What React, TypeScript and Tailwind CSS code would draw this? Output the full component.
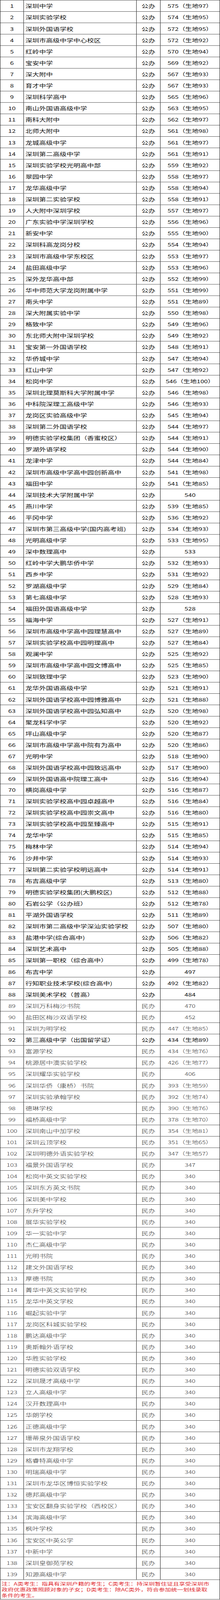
const G = '公办'
const M = '民办'

// [学校, 性质, 分数线]
const rows: [string, string, string][] = [
    ['深圳中学', G, '575（生地97）'],
    ['深圳实验学校', G, '574（生地95）'],
    ['深圳外国语学校', G, '572（生地95）'],
    ['深圳市高级中学中心校区', G, '572（生地92）'],
    ['红岭中学', G, '570（生地94）'],
    ['宝安中学', G, '569（生地92）'],
    ['深大附中', G, '567（生地93）'],
    ['育才中学', G, '567（生地93）'],
    ['深圳科学高中', G, '565（生地96）'],
    ['南山外国语高级中学', G, '563（生地95）'],
    ['南科大附中', G, '562（生地97）'],
    ['北师大附中', G, '561（生地98）'],
    ['龙城高级中学', G, '561（生地97）'],
    ['深圳第二高级中学', G, '561（生地91）'],
    ['深圳实验学校光明高中部', G, '559（生地92）'],
    ['翠园中学', G, '558（生地97）'],
    ['龙华高级中学', G, '558（生地94）'],
    ['深圳第二实验学校', G, '558（生地91）'],
    ['人大附中深圳学校', G, '557（生地97）'],
    ['广东实验中学深圳学校', G, '556（生地96）'],
    ['新安中学', G, '555（生地90）'],
    ['深圳科高龙岗分校', G, '554（生地94）'],
    ['深圳市高级中学东校区', G, '553（生地97）'],
    ['盐田高级中学', G, '553（生地96）'],
    ['深外龙华高中部', G, '552（生地99）'],
    ['华中师范大学龙岗附属中学', G, '551（生地99）'],
    ['南头中学', G, '551（生地89）'],
    ['深大附属实验中学', G, '550（生地98）'],
    ['格致中学', G, '549（生地96）'],
    ['东北师大附中深圳学校', G, '549（生地92）'],
    ['宝安第一外国语学校', G, '548（生地91）'],
    ['华侨城中学', G, '547（生地94）'],
    ['红山中学', G, '547（生地92）'],
    ['松岗中学', G, '546（生地100）'],
    ['深圳北理莫斯科大学附属中学', G, '546（生地98）'],
    ['中科院深理工高级中学', G, '546（生地93）'],
    ['龙岗区实验高级中学', G, '545（生地94）'],
    ['深圳第二外国语学校', G, '544（生地97）'],
    ['明德实验学校集团（香蜜校区）', G, '544（生地91）'],
    ['罗湖外语学校', G, '544（生地90）'],
    ['龙津中学', G, '544（生地84）'],
    ['深圳市高级中学高中园创新高中', G, '541（生地98）'],
    ['福田中学', G, '541（生地85）'],
    ['深圳技术大学附属中学', G, '540'],
    ['燕川中学', G, '539（生地85）'],
    ['平冈中学', G, '536（生地92）'],
    ['深圳市第三高级中学(国内高考班)', G, '534（生地93）'],
    ['光明高级中学', G, '533（生地95）'],
    ['深中数理高中', G, '533'],
    ['红岭中学大鹏华侨中学', G, '532（生地93）'],
    ['西乡中学', G, '531（生地92）'],
    ['罗湖高级中学', G, '529（生地84）'],
    ['第七高级中学', G, '528（生地93）'],
    ['福田外国语高级中学', G, '528'],
    ['福海中学', G, '527（生地91）'],
    ['深圳市高级中学高中园理慧高中', G, '527（生地89）'],
    ['深圳实验学校高中园明理高中', G, '527（生地84）'],
    ['观澜中学', G, '525（生地92）'],
    ['深圳市高级中学高中园文博高中', G, '525（生地85）'],
    ['深圳致理中学', G, '523（生地90）'],
    ['龙华外国语高级中学', G, '521（生地91）'],
    ['深圳外国语学校高中园博雅高中', G, '521（生地88）'],
    ['深圳外国语学校高中园弘知高中', G, '520（生地98）'],
    ['聚龙科学中学', G, '520（生地92）'],
    ['坪山高级中学', G, '520（生地87）'],
    ['深圳市高级中学高中院有为高中', G, '520（生地86）'],
    ['光明中学', G, '518（生地90）'],
    ['深圳外国语学校高中园致远高中', G, '517（生地90）'],
    ['深圳外国语高中院理工高中', G, '516（生地94）'],
    ['横岗高级中学', G, '516（生地87）'],
    ['深圳实验学校高中园卓越高中', G, '516（生地84）'],
    ['深圳实验学校高中园崇文高中', G, '516（生地80）'],
    ['深圳实验学校高中园至臻高中', G, '515（生地91）'],
    ['龙华中学', G, '515（生地85）'],
    ['梅林中学', G, '514（生地94）'],
    ['沙井中学', G, '514（生地93）'],
    ['深圳第二实验学校明远高中', G, '514（生地91）'],
    ['布吉高级中学', G, '513（生地80）'],
    ['明德实验学校集团(大鹏校区)', G, '512（生地88）'],
    ['石岩公学（公办班）', G, '512（生地78）'],
    ['平湖外国语学校', G, '511（生地89）'],
    ['深圳市第二高级中学深汕实验学校', G, '507（生地80）'],
    ['盐港中学(综合高中)', G, '506（生地82）'],
    ['深圳艺术高中', G, '505（生地88）'],
    ['深圳第一职校（综合高中）', G, '499（生地78）'],
    ['布吉中学', G, '497'],
    ['行知职业技术学校(综合高中)', G, '492（生地82）'],
    ['深圳美术学校（普高）', G, '484'],
    ['深圳万科梅沙书院', M, '470'],
    ['盐田区梅沙双语学校', M, '452'],
    ['深圳为明学校', M, '447（生地85）'],
    ['第三高级中学（出国留学证）', G, '434（生地89）'],
    ['富源学校', M, '434（生地76）'],
    ['桃源居中澳实验学校', M, '426（生地77）'],
    ['深圳耀华实验学校', M, '406'],
    ['深圳华侨（康桥）书院', M, '393（生地59）'],
    ['深圳实验承翰学校', M, '392（生地74）'],
    ['德琳学校', M, '390（生地76）'],
    ['福桥高级中学', M, '378（生地70）'],
    ['深圳南山中加学校', M, '354（生地81）'],
    ['深圳云顶学校', M, '351（生地65）'],
    ['深圳明德外语实验学校', M, '347（生地57）'],
    ['福景外国语学校', M, '347'],
    ['松岗中英文实验学校', M, '340'],
    ['深圳东方英文书院', M, '340'],
    ['深圳美中学校', M, '340'],
    ['东升学校', M, '340'],
    ['展华实验学校', M, '340'],
    ['华一实验中学', M, '340'],
    ['杰仁高级中学', M, '340'],
    ['光明书院', M, '340'],
    ['建文外国语学校', M, '340'],
    ['厚德书院', M, '340'],
    ['菁华中英文实验学校', M, '340'],
    ['龙华中英文学校', M, '340'],
    ['崛起实验中学', M, '340'],
    ['龙岗区科城实验学校', M, '340'],
    ['鹏达高级中学', M, '340'],
    ['奥斯翰外语学校', M, '340'],
    ['华胜实验学校', M, '340'],
    ['明德实验双语学校', M, '340'],
    ['深圳晟才高级中学', M, '340'],
    ['立人高级中学', M, '340'],
    ['汉开数理高中', M, '340'],
    ['华朗学校', M, '340'],
    ['正德高级中学', M, '340'],
    ['珊蒂泉外国语学校', M, '340'],
    ['深圳市龙翔学校', M, '340'],
    ['格睿特高级中学', M, '340'],
    ['明瑞高级中学', M, '340'],
    ['深圳市龙华区博恒实验学校', M, '340'],
    ['德邦高级中学', M, '340'],
    ['宝安区翻身实验学校（西校区）', M, '340'],
    ['滨海高级中学', M, '340'],
    ['枫叶学校', M, '340'],
    ['宝安区中英公学', M, '340'],
    ['中新中学', M, '340'],
    ['深圳皇御苑学校', M, '340'],
    ['知源高级中学', M, '340'],
]

function ScoreRow({no, name, type, score}: {no: number; name: string; type: string; score: string}) {
    // 民办 rows use a thinner, greyer face in the source sheet
    const minban = type === M
    return (
        <div
            className={`flex border-b border-[#111] ${no === 69 ? 'h-[38px]' : 'h-[40px]'} ${minban ? 'text-[#2b2b2b] font-light' : 'text-[#111]'}`}
        >
            <div className="w-[60px] shrink-0 flex items-center justify-center border-r border-[#111] text-[17px] leading-[24px]">
                {no}
            </div>
            <div className="w-[288px] shrink-0 flex items-center pl-[4px] border-r border-[#111] text-[17.5px] leading-[24px] whitespace-nowrap overflow-hidden">
                {name}
            </div>
            <div className="w-[61px] shrink-0 flex items-center justify-center border-r border-[#111] text-[17.5px] leading-[24px]">
                {type}
            </div>
            <div className="flex-1 flex items-center justify-center text-[17px] leading-[24px] whitespace-nowrap">
                {score}
            </div>
        </div>
    )
}

export default function App() {
    // the capture stops at 4096px, so the sheet is drawn at 4096/5630 height
    return (
        <div className="w-[562px] h-[4096px] overflow-hidden bg-white">
            <div className="origin-top scale-y-[0.72753] font-['Noto_Sans_CJK_SC','Noto_Sans',sans-serif]">
                <div className="border-t border-l border-r border-[#111]">
                    {rows.map(([name, type, score], i) => (
                        <ScoreRow key={i} no={i + 1} name={name} type={type} score={score} />
                    ))}

                    {/* Note */}
                    <div className="h-[69px] border-b border-[#111] pl-[3px] pt-[3px] text-[15.5px] leading-[21px] text-[#e0282e] whitespace-nowrap">
                        注：A类考生：指具有深圳户籍的考生；C类考生：持深圳暂住证且享受深圳市
                        <br />
                        政府优惠政策照顾对象的子女；D类考生：除AC类外，符合参加统一划线录取
                        <br />
                        条件的考生。
                    </div>
                </div>
            </div>
        </div>
    )
}
